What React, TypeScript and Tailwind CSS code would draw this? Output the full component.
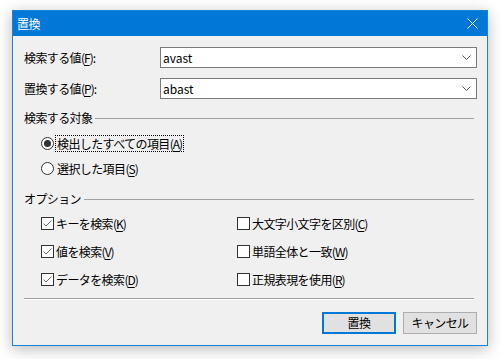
import type { ReactNode } from 'react';

type Option = {
    label: string;
    key: string;
    checked: boolean;
};

const leftOptions: Option[] = [
    { label: 'キーを検索', key: 'K', checked: true },
    { label: '値を検索', key: 'V', checked: true },
    { label: 'データを検索', key: 'D', checked: true },
];

const rightOptions: Option[] = [
    { label: '大文字小文字を区別', key: 'C', checked: false },
    { label: '単語全体と一致', key: 'W', checked: false },
    { label: '正規表現を使用', key: 'R', checked: false },
];

function Key({ k }: { k: string }) {
    return (
        <span className="tracking-[-1px]">
            (<span className="underline underline-offset-2">{k}</span>)
        </span>
    );
}

function Combo({ value }: { value: string }) {
    return (
        <div className="flex h-[21px] flex-1 items-center border border-[#7a7a7a] bg-white pl-[2px] pr-[5px]">
            <span className="flex-1 text-[12px] leading-none tracking-normal text-black">{value}</span>
            <svg width="9" height="6" viewBox="0 0 9 6" className="text-[#555]">
                <path d="M0.5 0.5 L4.5 4.5 L8.5 0.5" fill="none" stroke="currentColor" strokeWidth="1" />
            </svg>
        </div>
    );
}

function GroupHeading({ title }: { title: string }) {
    return (
        <div className="mr-[3px] flex h-[16px] items-center gap-[3px]">
            <span className="text-[12px] leading-none">{title}</span>
            <div className="h-px flex-1 bg-[#a0a0a0]" />
        </div>
    );
}

function Radio({ checked, children, focused }: { checked: boolean; children: ReactNode; focused?: boolean }) {
    return (
        <div className="flex h-[17px] items-center">
            <span className="flex h-[13px] w-[13px] items-center justify-center rounded-full border border-[#333] bg-white">
                {checked && <span className="h-[7px] w-[7px] rounded-full bg-[#333]" />}
            </span>
            <span className={`ml-[1px] flex h-[17px] items-center px-[1px] text-[12px] leading-none ${focused ? 'border border-dotted border-black' : 'border border-transparent'}`}>
                {children}
            </span>
        </div>
    );
}

function Check({ option }: { option: Option }) {
    return (
        <div className="flex h-[13px] items-center">
            <span className="flex h-[13px] w-[13px] items-center justify-center border border-[#333] bg-white">
                {option.checked && (
                    <svg width="11" height="11" viewBox="0 0 11 11">
                        <path d="M1.5 5.5 L4 8 L9.5 2.5" fill="none" stroke="#6d6d6d" strokeWidth="1" />
                    </svg>
                )}
            </span>
            <span className="ml-[2px] text-[12px] leading-none">
                {option.label}
                <Key k={option.key} />
            </span>
        </div>
    );
}

export default function App() {
    return (
        <div className="h-[359px] w-[501px] bg-white pl-[12px] pt-[10px] font-['Noto_Sans_CJK_JP','Liberation_Sans',sans-serif] tracking-[-0.6px] text-black">
            <div className="flex h-[336px] w-[476px] flex-col border border-[#1883d7] bg-[#f0f0f0] shadow-[0_3px_14px_rgba(0,0,0,0.28)]">
                <div className="flex h-[25px] items-center bg-[#0078d7] pl-[4px] pr-[9px] text-white">
                    <span className="flex-1 text-[12px] leading-none">置換</span>
                    <svg width="11" height="11" viewBox="0 0 11 11">
                        <path d="M0.5 0.5 L10.5 10.5 M10.5 0.5 L0.5 10.5" stroke="white" strokeWidth="1" />
                    </svg>
                </div>

                <div className="flex flex-1 flex-col pl-[11px] pr-[10px]">
                    <div className="mt-[11px] flex items-center">
                        <span className="w-[136px] text-[12px] leading-none">
                            検索する値<Key k="F" />:
                        </span>
                        <Combo value="avast" />
                    </div>
                    <div className="mt-[10px] flex items-center">
                        <span className="w-[136px] text-[12px] leading-none">
                            置換する値<Key k="P" />:
                        </span>
                        <Combo value="abast" />
                    </div>

                    <div className="mt-[11px]">
                        <GroupHeading title="検索する対象" />
                    </div>
                    <div className="ml-[17px] mt-[9px] flex flex-col gap-[8px]">
                        <Radio checked focused>
                            検出したすべての項目<Key k="A" />
                        </Radio>
                        <Radio checked={false}>
                            選択した項目<Key k="S" />
                        </Radio>
                    </div>

                    <div className="mt-[14px]">
                        <GroupHeading title="オプション" />
                    </div>
                    <div className="ml-[17px] mt-[10px] grid grid-cols-[196px_1fr] gap-y-[15px]">
                        {leftOptions.map((option, i) => (
                            <div key={option.key} className="contents">
                                <Check option={option} />
                                <Check option={rightOptions[i]} />
                            </div>
                        ))}
                    </div>

                    <div className="mr-[3px] mt-[12px] border-t border-[#a0a0a0] border-b border-b-white" />

                    <div className="mt-[12px] flex justify-end gap-[7px]">
                        <button className="h-[22px] w-[74px] border-2 border-[#0078d7] bg-[#e1e1e1] text-[12px] leading-none">置換</button>
                        <button className="h-[22px] w-[74px] border border-[#adadad] bg-[#e1e1e1] text-[12px] leading-none">キャンセル</button>
                    </div>
                </div>
            </div>
        </div>
    );
}
